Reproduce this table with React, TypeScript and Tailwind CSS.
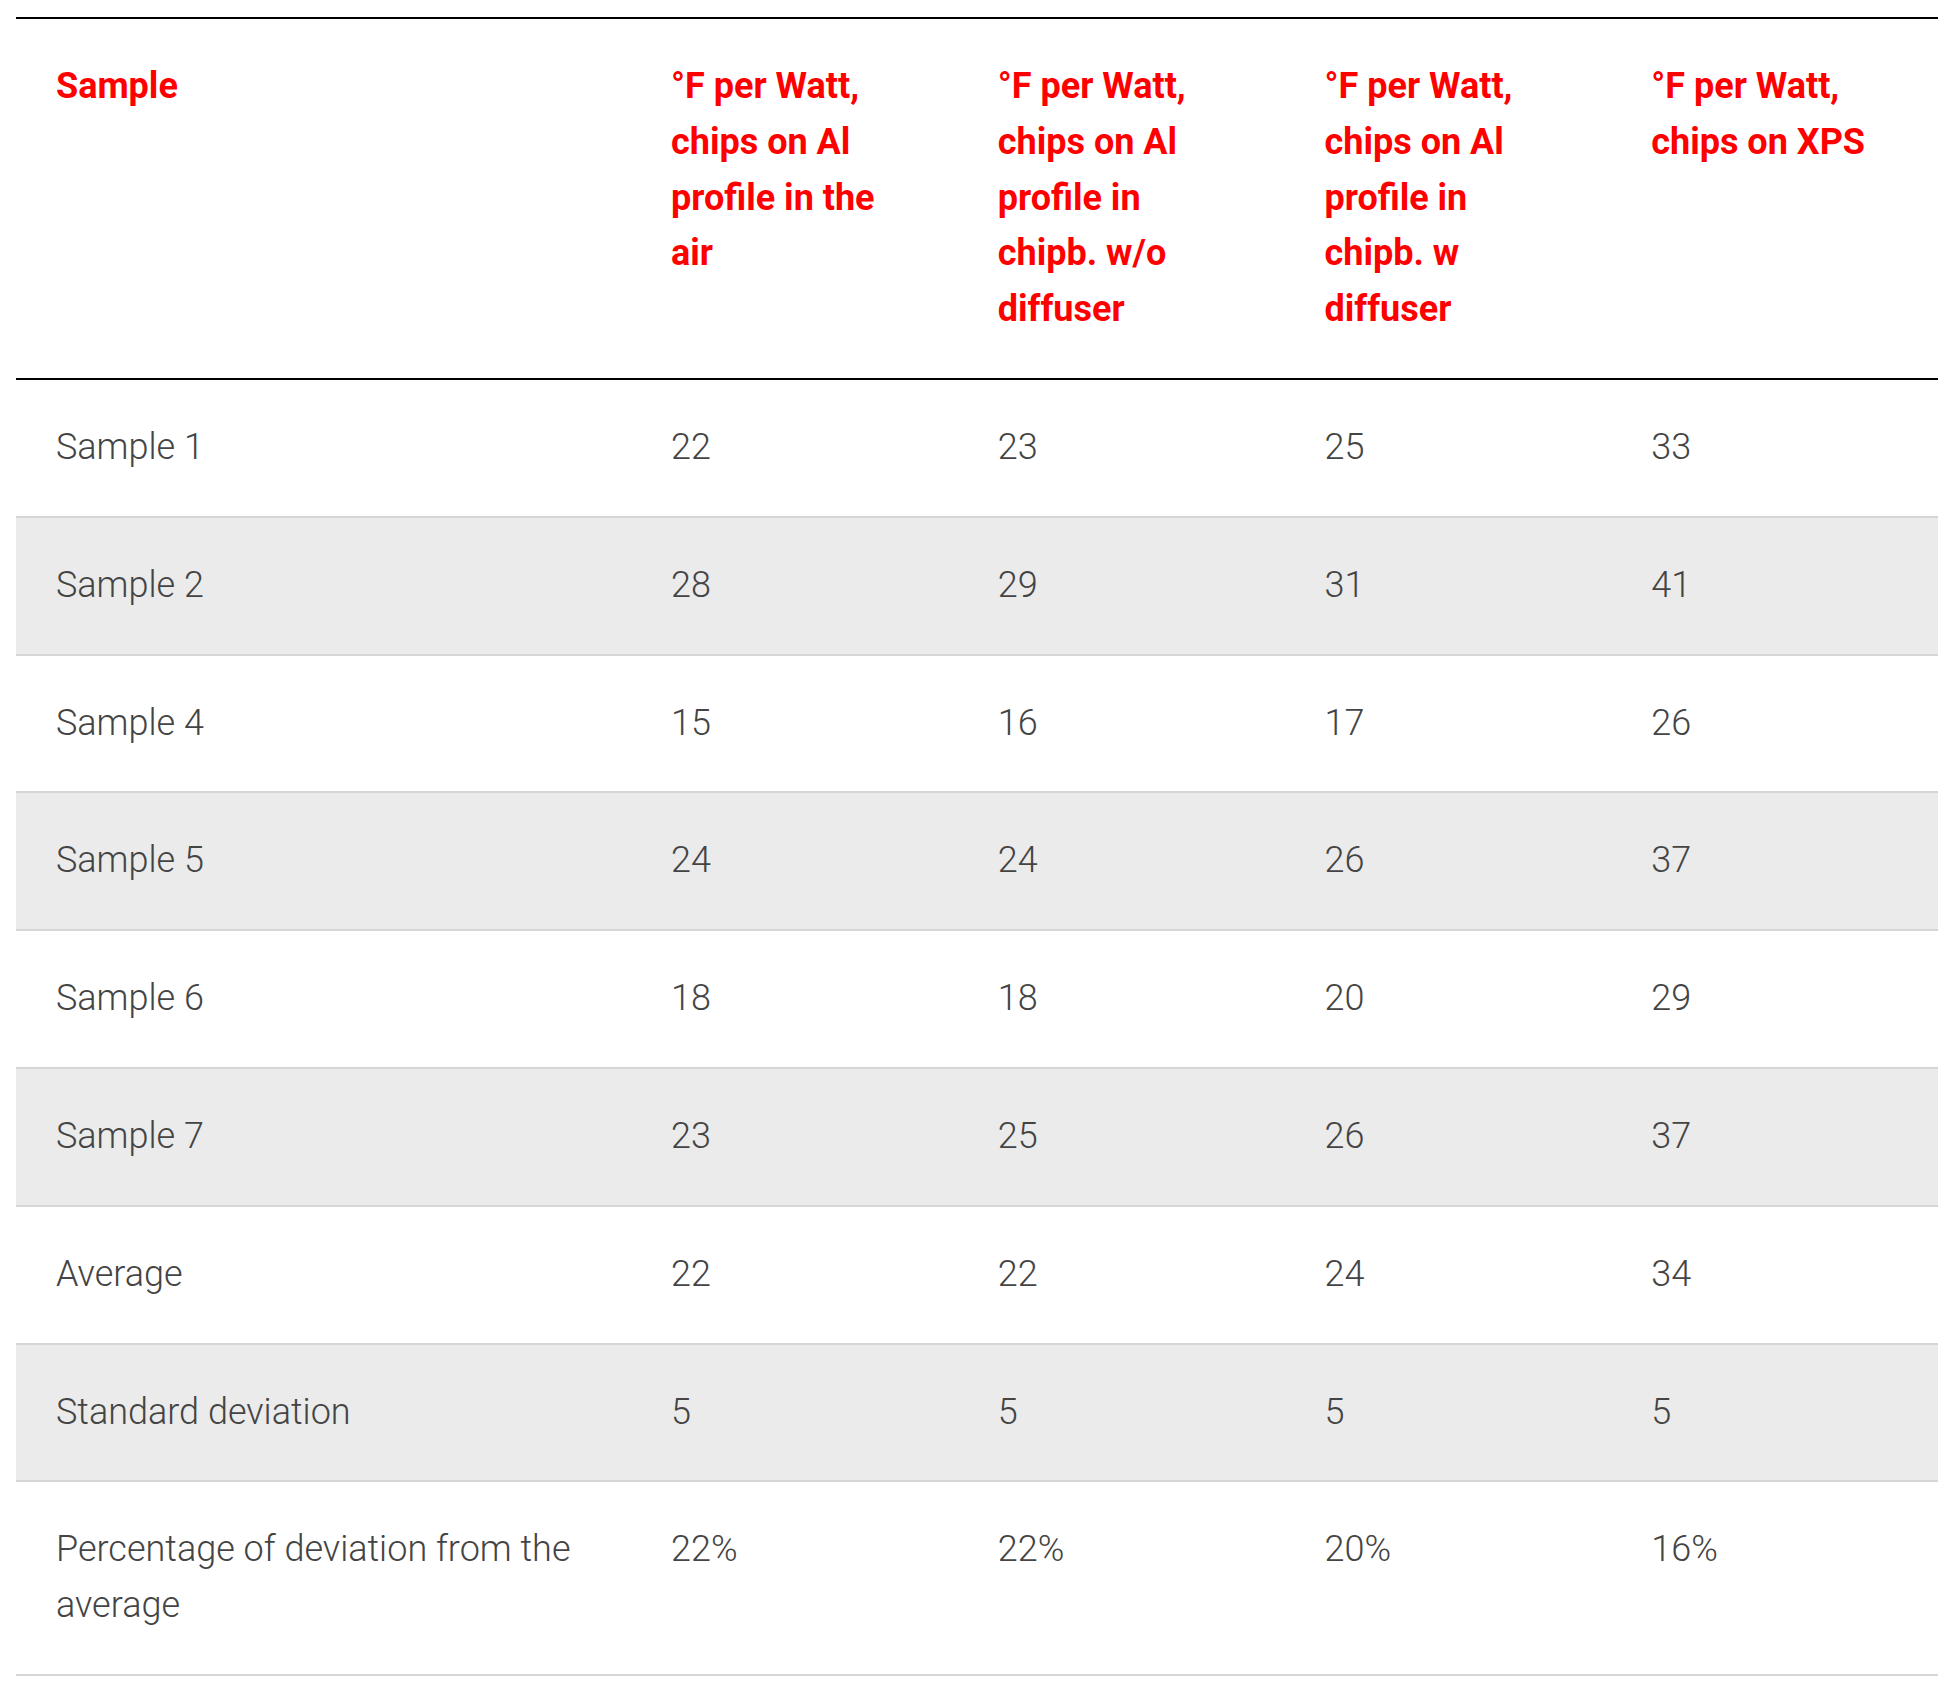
import React from "react";

const headers = [
  "Sample",
  "°F per Watt, chips on Al profile in the air",
  "°F per Watt, chips on Al profile in chipb. w/o diffuser",
  "°F per Watt, chips on Al profile in chipb. w diffuser",
  "°F per Watt, chips on XPS",
];

const rows: string[][] = [
  ["Sample 1", "22", "23", "25", "33"],
  ["Sample 2", "28", "29", "31", "41"],
  ["Sample 4", "15", "16", "17", "26"],
  ["Sample 5", "24", "24", "26", "37"],
  ["Sample 6", "18", "18", "20", "29"],
  ["Sample 7", "23", "25", "26", "37"],
  ["Average", "22", "22", "24", "34"],
  ["Standard deviation", "5", "5", "5", "5"],
  ["Percentage of deviation from the average", "22%", "22%", "20%", "16%"],
];

export default function App() {
  return (
    <div className="min-h-[1700px] bg-white px-4 pt-[17px] font-['Roboto',sans-serif]">
      <table className="w-full table-fixed border-collapse">
        <colgroup>
          <col className="w-[32%]" />
          <col className="w-[17%]" />
          <col className="w-[17%]" />
          <col className="w-[17%]" />
          <col className="w-[17%]" />
        </colgroup>
        <thead>
          <tr className="border-t-2 border-b-2 border-black">
            {headers.map((h, i) => (
              <th
                key={i}
                className="py-10 pl-10 pr-[42px] text-left align-top font-['Roboto',sans-serif] text-[36px] leading-[1.55] font-bold text-[#ff0000]"
              >
                {h}
              </th>
            ))}
          </tr>
        </thead>
        <tbody>
          {rows.map((r, ri) => (
            <tr
              key={ri}
              className={
                "border-b-2 border-[#d6d6d6] " +
                (ri % 2 === 1 ? "bg-[#ebebeb]" : "bg-white")
              }
            >
              {r.map((c, ci) => (
                <td
                  key={ci}
                  className="py-10 pl-10 pr-[42px] text-left align-top font-['Roboto_Light','Roboto',sans-serif] text-[36px] leading-[1.55] font-light text-[#444444]"
                >
                  {c}
                </td>
              ))}
            </tr>
          ))}
        </tbody>
      </table>
    </div>
  );
}
